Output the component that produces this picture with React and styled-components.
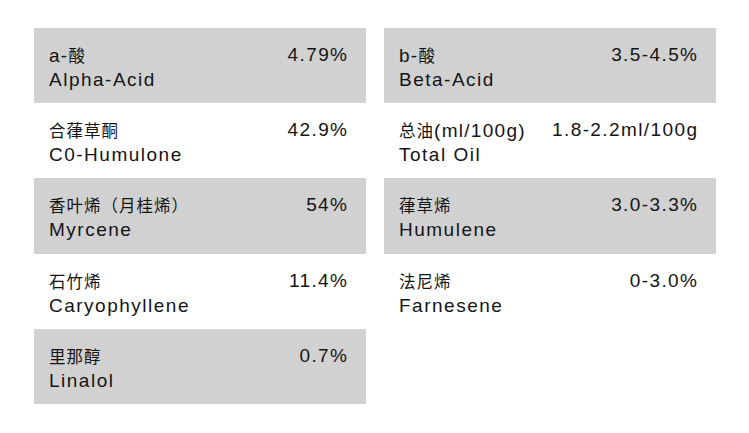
import styled, { createGlobalStyle } from 'styled-components';

const GlobalStyle = createGlobalStyle`
  html, body {
    margin: 0;
    padding: 0;
    background: #ffffff;
  }
  body {
    font-family: "Liberation Sans", Arial, "Noto Sans CJK SC", sans-serif;
    color: #141414;
  }
`;

const leftItems = [
  { cn: 'a-酸', en: 'Alpha-Acid', value: '4.79%' },
  { cn: '合葎草酮', en: 'C0-Humulone', value: '42.9%' },
  { cn: '香叶烯（月桂烯）', en: 'Myrcene', value: '54%' },
  { cn: '石竹烯', en: 'Caryophyllene', value: '11.4%' },
  { cn: '里那醇', en: 'Linalol', value: '0.7%' },
];

const rightItems = [
  { cn: 'b-酸', en: 'Beta-Acid', value: '3.5-4.5%' },
  { cn: '总油(ml/100g)', en: 'Total Oil', value: '1.8-2.2ml/100g' },
  { cn: '葎草烯', en: 'Humulene', value: '3.0-3.3%' },
  { cn: '法尼烯', en: 'Farnesene', value: '0-3.0%' },
];

// split a label into runs of chinese and latin text
const splitRuns = (text) =>
  text.match(/[\u3000-\u9fff\uff00-\uffef]+|[^\u3000-\u9fff\uff00-\uffef]+/g) || [];

const isHan = (run) => /[\u3000-\u9fff\uff00-\uffef]/.test(run);

const Column = ({ items }) => (
  <List>
    {items.map((item, i) => (
      <Row key={item.en} $shaded={i % 2 === 0}>
        <Label>
          <Cn>
            {splitRuns(item.cn).map((run, j) =>
              isHan(run) ? <Han key={j}>{run}</Han> : <span key={j}>{run}</span>
            )}
          </Cn>
          <En>{item.en}</En>
        </Label>
        <Value>{item.value}</Value>
      </Row>
    ))}
  </List>
);

const App = () => (
  <>
    <GlobalStyle />
    <Page>
      <Column items={leftItems} />
      <Column items={rightItems} />
    </Page>
  </>
);

const Page = styled.div`
  display: grid;
  grid-template-columns: 332px 332px;
  column-gap: 18px;
  align-items: start;
  padding: 28px 33px 0 34px;
`;

const List = styled.div`
  display: flex;
  flex-direction: column;
`;

const Row = styled.div`
  height: 75.2px;
  box-sizing: border-box;
  display: flex;
  justify-content: space-between;
  align-items: flex-start;
  padding: 15px 19px 0 15px;
  background: ${(p) => (p.$shaded ? '#d1d1d1' : '#ffffff')};
`;

const Label = styled.div`
  display: flex;
  flex-direction: column;
`;

const Cn = styled.span`
  font-size: 19px;
  line-height: 24px;
  letter-spacing: 1.3px;
  white-space: nowrap;
`;

const Han = styled.span`
  font-family: "Noto Sans CJK SC", sans-serif;
  font-size: 16.5px;
  letter-spacing: 1px;
`;

const En = styled.span`
  font-size: 19px;
  line-height: 24px;
  letter-spacing: 1.5px;
  white-space: nowrap;
`;

const Value = styled.span`
  font-size: 19px;
  line-height: 24px;
  letter-spacing: 1.4px;
  margin-right: -1.4px;
  white-space: nowrap;
`;

export default App;
